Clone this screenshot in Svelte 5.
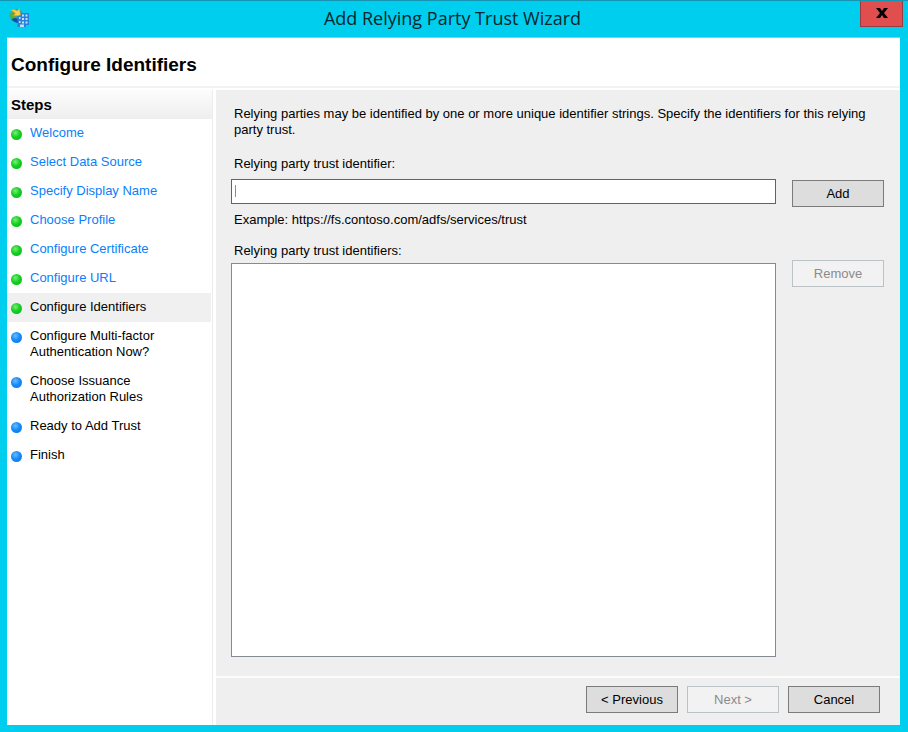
<script>
	const steps = [
		{ label: "Welcome", state: "done" },
		{ label: "Select Data Source", state: "done" },
		{ label: "Specify Display Name", state: "done" },
		{ label: "Choose Profile", state: "done" },
		{ label: "Configure Certificate", state: "done" },
		{ label: "Configure URL", state: "done" },
		{ label: "Configure Identifiers", state: "current" },
		{ label: "Configure Multi-factor Authentication Now?", state: "pending" },
		{ label: "Choose Issuance Authorization Rules", state: "pending" },
		{ label: "Ready to Add Trust", state: "pending" },
		{ label: "Finish", state: "pending" }
	];

	let identifier = $state("");
	let identifiers = $state([]);
	let selected = $state([]);

	function addIdentifier() {
		const value = identifier.trim();
		if (value && !identifiers.includes(value)) {
			identifiers.push(value);
		}
		identifier = "";
	}

	function removeSelected() {
		identifiers = identifiers.filter((item) => !selected.includes(item));
		selected = [];
	}
</script>

<div class="window">
	<header class="titlebar">
		<svg class="app-icon" viewBox="0 0 22 22" aria-hidden="true">
			<circle cx="7.5" cy="8.5" r="6.8" fill="#2f9fc0" />
			<path d="M1 8 Q2 3 7 2 L8 7 L5 12 L3 13 Q1 11 1 8Z" fill="#5cae3c" />
			<path d="M2.5 12 Q5 16 10 16 L10 12 L6 11Z" fill="#1450a0" />
			<path d="M2 3.5 Q5 1.5 8 4 L10.5 1.5 L11.5 9 L4.5 8.5 L6.5 6.5 Q4.500 4.500 2 3.500Z" fill="#fbd04a" stroke="#e0a020" stroke-width=".6" />
			<path d="M8.500 9 L12 8 L12 6 L20 6 L20 18 L17 18 L17 20 L8.500 20Z" fill="#2a7fd6" />
			<path d="M10 10h1.500v2h-1.500zM13 7.500h2v2h-2zM16.500 7.500h2v2h-2zM13 11h2v2h-2zM16.500 11h2v2h-2zM10 14h1.500v2h-1.500zM13 14.500h2v2h-2zM16.500 14.500h2v2h-2zM11 17.500h4v2.500h-4z" fill="#b5e6fc" />
		</svg>
		<span class="caption">Add Relying Party Trust Wizard</span>
		<button class="close" aria-label="Close">
			<svg viewBox="0 0 12 10" aria-hidden="true">
				<path d="M0 0h4l2 3 2-3h4L8 5l4 5H8L6 7l-2 3H0l4-5z" />
			</svg>
		</button>
	</header>

	<div class="client">
		<h1>Configure Identifiers</h1>

		<div class="body">
			<nav class="sidebar">
				<h2>Steps</h2>
				<ul>
					{#each steps as step (step.label)}
						<li class={step.state}>
							<span class="bullet"></span>
							{#if step.state === "done"}
								<a href="#step">{step.label}</a>
							{:else}
								<span>{step.label}</span>
							{/if}
						</li>
					{/each}
				</ul>
			</nav>

			<main>
				<div class="content">
					<p class="intro">
						Relying parties may be identified by one or more unique identifier strings. Specify the
						identifiers for this relying party trust.
					</p>

					<div class="row">
						<div class="field">
							<label for="identifier">Relying party trust identifier:</label>
							<input
								id="identifier"
								class:empty={!identifier}
								type="text"
								autocomplete="off"
								bind:value={identifier}
							/>
						</div>
						<button class="add" onclick={addIdentifier}>Add</button>
					</div>
					<p class="example">Example: https://fs.contoso.com/adfs/services/trust</p>

					<div class="row grow">
						<div class="field">
							<label for="identifiers">Relying party trust identifiers:</label>
							<select id="identifiers" multiple bind:value={selected}>
								{#each identifiers as item (item)}
									<option value={item}>{item}</option>
								{/each}
							</select>
						</div>
						<button class="remove" disabled={!selected.length} onclick={removeSelected}>Remove</button>
					</div>
				</div>

				<footer>
					<button>&lt; Previous</button>
					<button disabled>Next &gt;</button>
					<button>Cancel</button>
				</footer>
			</main>
		</div>
	</div>
</div>

<style>
	:global(body) {
		margin: 0;
	}

	.window {
		box-sizing: border-box;
		display: flex;
		flex-direction: column;
		min-height: 100vh;
		padding: 0 8px 7px 7px;
		border-top: 1px solid #1595b2;
		background: #00ceee;
		color: #000;
		font: 13px/16px "Liberation Sans", Arial, sans-serif;
	}

	.titlebar {
		display: grid;
		grid-template-columns: 38px 1fr 43px;
		height: 36px;
		margin-right: -3px;
	}

	.app-icon {
		width: 22px;
		height: 22px;
		margin: 6px 0 0 2px;
	}

	.caption {
		margin-top: 5px;
		color: #06262c;
		font: 18px/24px "Open Sans", "Noto Sans", sans-serif;
		text-align: center;
	}

	.close {
		display: flex;
		align-items: center;
		justify-content: center;
		min-width: 0;
		height: 26px;
		padding: 0 0 2px;
		border: 1px solid #963c42;
		border-top: 0;
		background: #e04f4e;
	}

	.close svg {
		width: 12px;
		height: 10px;
	}

	.client {
		display: flex;
		flex: 1;
		flex-direction: column;
		border-top: 1px solid #8ccdd9;
		background: #fff;
	}

	h1 {
		margin: 0;
		padding: 15px 4px 10px;
		border-bottom: 2px solid #f3f3f3;
		font-size: 19px;
		line-height: 23px;
	}

	.body {
		display: flex;
		flex: 1;
		padding-top: 2px;
	}

	.sidebar {
		box-sizing: border-box;
		flex: none;
		width: 206px;
		margin-right: 3px;
		border-right: 1px solid #ececec;
	}

	h2 {
		margin: 0;
		padding: 0 4px;
		background: linear-gradient(#fcfcfc, #eee);
		font-size: 15px;
		line-height: 29px;
	}

	ul {
		margin: 0 1px 0 0;
		padding: 0;
		list-style: none;
	}

	li {
		display: flex;
		gap: 8px;
		padding: 6px 48px 7px 4px;
	}

	li.current {
		background: #f0f0f0;
	}

	a {
		color: #0a80fa;
		text-decoration: none;
	}

	.bullet {
		flex: none;
		width: 11px;
		height: 11px;
		margin-top: 4px;
		border-radius: 50%;
		background: radial-gradient(circle at 40% 35%, #7cec7c, #12d021 45%, #06b812);
	}

	.pending .bullet {
		background: radial-gradient(circle at 40% 35%, #6cbcff, #148af8 45%, #0878e8);
	}

	main {
		display: flex;
		flex: 1;
		flex-direction: column;
		background: #efefef;
	}

	.content {
		display: flex;
		flex: 1;
		flex-direction: column;
		padding: 16px 16px 19px 15px;
	}

	p,
	label {
		margin: 0;
		padding-left: 3px;
	}

	.intro {
		margin-bottom: 18px;
	}

	.row {
		display: flex;
		align-items: flex-start;
		gap: 16px;
	}

	.grow {
		flex: 1;
	}

	.field {
		display: flex;
		flex: 1;
		flex-direction: column;
		align-self: stretch;
		gap: 7px;
		min-width: 0;
	}

	.grow .field {
		gap: 4px;
	}

	.add {
		margin-top: 24px;
	}

	.remove {
		margin-top: 17px;
	}

	.example {
		margin: 5px 0 15px;
	}

	input,
	select {
		box-sizing: border-box;
		margin: 0;
		border: 1px solid #858b92;
		border-radius: 0;
		outline: none;
		background: #fff;
		font: inherit;
	}

	input {
		height: 25px;
		padding: 0 3px;
		border: 1px solid #1b7ba6;
	}

	/* resting caret */
	input.empty {
		background: linear-gradient(#8583c6, #8583c6) 3px 5px / 1px 12px no-repeat #fff;
		caret-color: transparent;
	}

	select {
		flex: 1;
	}

	button {
		box-sizing: border-box;
		min-width: 92px;
		height: 27px;
		padding: 0 8px;
		border: 1px solid #7b7b7b;
		border-radius: 0;
		background: #ddd;
		color: #000;
		font: inherit;
	}

	button:disabled {
		border-color: #bcc3c6;
		background: #f2f2f2;
		color: #8b8b8b;
	}

	footer {
		display: flex;
		justify-content: flex-end;
		gap: 9px;
		padding: 8px 20px 12px;
		border-top: 2px solid #fcfcfc;
	}
</style>
